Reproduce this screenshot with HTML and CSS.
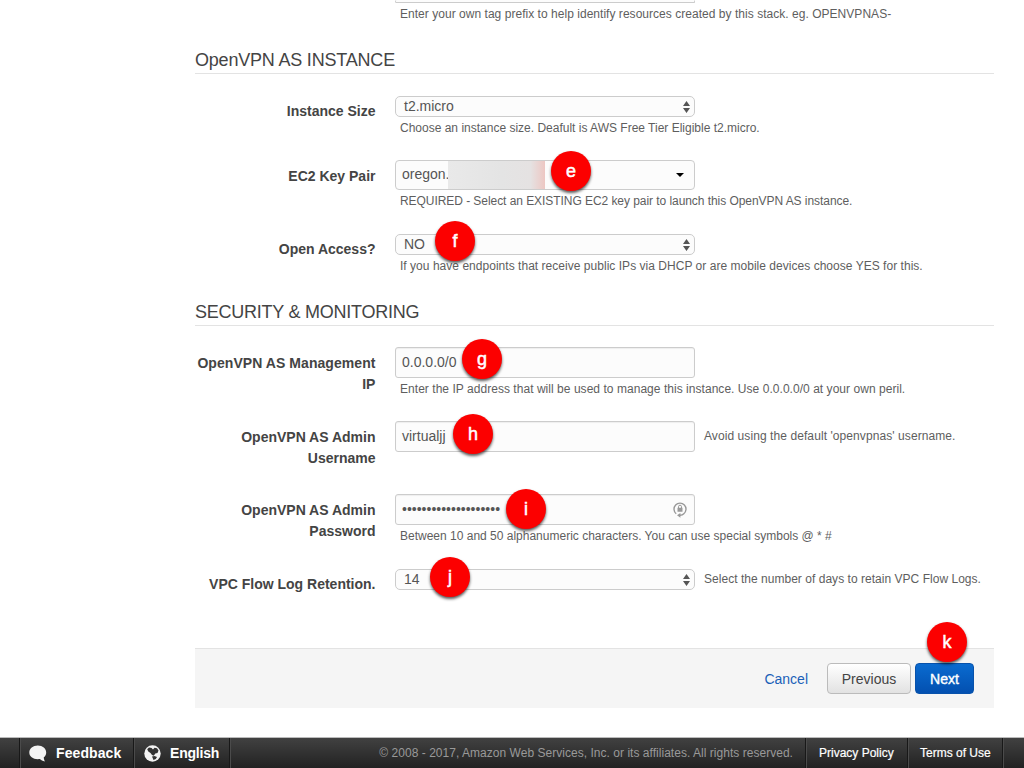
FILE: index.html
```html
<!DOCTYPE html>
<html lang="en">
<head>
<meta charset="utf-8">
<title>Specify Details</title>
<link rel="stylesheet" href="styles.css">
</head>
<body>
<div class="page">
  <main class="content">
    <div class="row row-prefix">
      <div class="label"></div>
      <div class="field">
        <div class="input input-cut"></div>
        <div class="help"><span class="t-prefix">Enter your own tag prefix to help identify resources created by this stack. eg. OPENVPNAS-</span></div>
      </div>
    </div>

    <h2 class="section"><span class="t-instance">OpenVPN AS INSTANCE</span></h2>
    <div class="row row-size">
      <div class="label"><span class="l-size">Instance Size</span></div>
      <div class="field">
        <div class="select"><span>t2.micro</span><svg class="arrows" viewBox="0 0 7 14"><path d="M0 6 3.500 1 7 6zM0 8h7l-3.500 5z"/></svg></div>
        <div class="help"><span class="t-size">Choose an instance size. Deafult is AWS Free Tier Eligible t2.micro.</span></div>
      </div>
    </div>
    <div class="row row-tall">
      <div class="label label-low"><span>EC2 Key Pair</span></div>
      <div class="field">
        <div class="combo"><span>oregon.</span><i class="redacted"></i><svg class="caret" viewBox="0 0 8 4"><path d="M0 0h8L4 4z"/></svg></div>
        <div class="help"><span class="t-key">REQUIRED - Select an EXISTING EC2 key pair to launch this OpenVPN AS instance.</span></div>
        <b class="badge badge-e">e</b>
      </div>
    </div>
    <div class="row row-access">
      <div class="label"><span>Open Access?</span></div>
      <div class="field">
        <div class="select"><span>NO</span><svg class="arrows" viewBox="0 0 7 14"><path d="M0 6 3.500 1 7 6zM0 8h7l-3.500 5z"/></svg></div>
        <div class="help"><span class="t-access">If you have endpoints that receive public IPs via DHCP or are mobile devices choose YES for this.</span></div>
        <b class="badge badge-f">f</b>
      </div>
    </div>

    <h2 class="section"><span class="t-security">SECURITY &amp; MONITORING</span></h2>
    <div class="row row-ip">
      <div class="label label-low"><span class="l-ip">OpenVPN AS Management<br>IP</span></div>
      <div class="field">
        <div class="input"><span>0.0.0.0/0</span></div>
        <div class="help"><span class="t-ip">Enter the IP address that will be used to manage this instance. Use 0.0.0.0/0 at your own peril.</span></div>
        <b class="badge badge-g">g</b>
      </div>
    </div>
    <div class="row row-user">
      <div class="label label-low"><span>OpenVPN AS Admin<br>Username</span></div>
      <div class="field">
        <div class="input"><span>virtualjj</span></div>
        <b class="badge badge-h">h</b>
      </div>
      <div class="side"><span class="t-user">Avoid using the default 'openvpnas' username.</span></div>
    </div>
    <div class="row row-tall">
      <div class="label label-low"><span>OpenVPN AS Admin<br>Password</span></div>
      <div class="field">
        <div class="input"><span class="dots">••••••••••••••••••••</span>
          <svg class="lock" viewBox="0 0 14 16"><path class="ring" d="M3.200 11.800A6 6 0 1 1 10.800 11.800Q9.500 13.300 7 13.300"/><path d="M4 13.300 7.400 10.900v4.800zM4.500 5.800h5v4h-5z"/><path class="shackle" d="M5.500 6V4.700a1.500 1.500 0 0 1 3 0V6"/></svg>
        </div>
        <div class="help"><span class="t-pass">Between 10 and 50 alphanumeric characters. You can use special symbols @ * #</span></div>
        <b class="badge badge-i">i</b>
      </div>
    </div>
    <div class="row row-log">
      <div class="label label-low"><span class="l-log">VPC Flow Log Retention.</span></div>
      <div class="field">
        <div class="select"><span>14</span><svg class="arrows" viewBox="0 0 7 14"><path d="M0 6 3.500 1 7 6zM0 8h7l-3.500 5z"/></svg></div>
        <b class="badge badge-j">j</b>
      </div>
      <div class="side side-short"><span class="t-log">Select the number of days to retain VPC Flow Logs.</span></div>
    </div>

    <div class="actions">
      <a class="cancel">Cancel</a>
      <div class="btn btn-prev">Previous</div>
      <div class="btn btn-next">Next</div>
      <b class="badge badge-k">k</b>
    </div>
  </main>

  <footer class="bar">
    <div class="cell cell-edge"></div>
    <div class="cell cell-feedback">
      <svg class="bubble" viewBox="0 0 18 17"><path d="M8.800.5c4.800 0 8.400 3 8.400 6.900 0 2-.9 3.700-2.400 4.900 0 1.500.3 2.700 1.100 4.200-2.200-.4-3.900-1.300-5-2.500C4.800 14.900.3 11.700.3 7.400.3 3.500 4 .5 8.800.5z"/></svg>
      <span>Feedback</span>
    </div>
    <div class="cell cell-lang">
      <svg class="globe" viewBox="0 0 17 17"><circle cx="8.500" cy="8.500" r="8.200"/><path d="M3.200 4.200 5 2.600l2.600.3L9 4.600l1.500-1.900 2.500.6 1.500 2.200-1 2.500-2.200.4-1.500 2.300-1.800-.6L6.500 8 4.300 6.600zM8 11.500l2.500-.5 2.500 1-1.200 2-2.300 1z"/></svg>
      <span>English</span>
    </div>
    <div class="copy"><span class="t-copy">© 2008 - 2017, Amazon Web Services, Inc. or its affiliates. All rights reserved.</span></div>
    <div class="cell cell-privacy"><span>Privacy Policy</span></div>
    <div class="cell cell-terms"><span>Terms of Use</span></div>
    <div class="cell cell-end"></div>
  </footer>
</div>
</body>
</html>
```
FILE: styles.css
```css
* { box-sizing: border-box; }
body {
  margin: 0;
  background: #fff;
  color: #444;
  font-family: "Liberation Sans", Arial, sans-serif;
  overflow: hidden;
}
.page { height: 768px; display: flex; flex-direction: column; overflow: hidden; }
.content { width: 799px; margin-left: 195px; height: 738px; flex: none; }
span { white-space: nowrap; }

.row { display: grid; grid-template-columns: 180.5px 300px 1fr; column-gap: 19.5px; }
.row > .side { margin-left: -10.5px; }
.row-prefix { height: 48px; }
.row-size { height: 64px; }
.row-tall { height: 74px; }
.row-access { height: 66px; }
.row-ip { height: 74px; }
.row-user { height: 73px; }
.row-log { height: 80px; }

.section {
  margin: 0 0 22px;
  height: 26px;
  line-height: 25px;
  border-bottom: 1px solid #e3e3e3;
  font-size: 18px;
  font-weight: 400;
  color: #444;
}
.row-access + .section { margin-bottom: 21px; }

.label { padding-top: 5px; text-align: right; font-size: 14px; font-weight: 700; line-height: 21px; }
.label-low { padding-top: 6px; }
.field { position: relative; }
.select, .combo, .input {
  display: flex;
  align-items: center;
  border: 1px solid #ccc;
  background: #fcfcfc;
  font-size: 14px;
  color: #555;
}
.select { height: 21px; padding: 0 4px 0 8px; border-radius: 5px; justify-content: space-between; }
.select span { margin-bottom: 2px; }
.row-log .select { margin-top: 1px; }
.combo { height: 30px; padding: 0 10px 0 6px; border-radius: 4px; }
.input { height: 31px; padding: 0 7px 0 6px; border-radius: 3px; box-shadow: inset 0 1px 1px #eee; }
.input span { margin-bottom: 2px; }
.input-cut { height: 3px; border-top: 0; margin-bottom: 2px; box-shadow: none; }
.arrows { width: 7px; height: 14px; fill: #555; }
.caret { width: 8px; height: 4px; margin: 0 0 0 auto; fill: #000; }
.redacted {
  width: 97px;
  height: 28px;
  margin-left: -1px;
  background: linear-gradient(90deg, #e9e9e9 0%, #e4e4e4 55%, #e5e2e2 85%, #edc7c3 100%);
}
.combo span { margin-bottom: 2px; }
.lock { width: 14px; height: 16px; margin-left: auto; fill: #999; }
.ring, .shackle { fill: none; stroke: #999; stroke-width: 1.4; }
.shackle { stroke-width: 1; }

.help { margin-top: 2px; padding-left: 5px; font-size: 12px; line-height: 18px; color: #5e5e5e; }
.side { padding-top: 6px; font-size: 12px; line-height: 18px; color: #5e5e5e; }
.side-short { padding-top: 2px; }

/* Tracking per line */
.t-instance { letter-spacing: -.2px; }
.t-security { letter-spacing: -.24px; }
.t-prefix { letter-spacing: .033px; }
.t-key { letter-spacing: -.058px; }
.t-access { letter-spacing: .03px; }
.t-ip { letter-spacing: .04px; }
.t-user { letter-spacing: .08px; }
.t-log { letter-spacing: .03px; }
.t-copy { letter-spacing: .03px; }
.l-ip { letter-spacing: .06px; }

.badge {
  position: absolute;
  width: 40px;
  height: 40px;
  border-radius: 50%;
  background: #fc0000;
  box-shadow: 0 2px 3px rgba(0, 0, 0, .65);
  color: #fff;
  font-size: 18px;
  font-weight: 400;
  -webkit-text-stroke: .5px #fff;
  line-height: 41px;
  text-align: center;
}
.badge-e { left: 156px; top: -9px; }
.badge-f { left: 40px; top: -13px; }
.badge-g { left: 67px; top: -8px; }
.badge-h { left: 58px; top: -7px; }
.badge-i { left: 111px; top: -5px; }
.badge-j { left: 35px; top: -11px; }
.badge-k { left: 732px; top: -27px; }

.actions {
  position: relative;
  height: 60px;
  display: flex;
  align-items: center;
  justify-content: flex-end;
  padding-right: 20px;
  background: #f5f5f5;
  border-top: 1px solid #e3e3e3;
  font-size: 14px;
}
.cancel { margin-right: 19px; color: #1a5fb8; }
.btn { height: 31px; line-height: 30px; border-radius: 4px; text-align: center; border: 1px solid #bbb; }
.btn-prev { width: 84px; margin-right: 4px; background: linear-gradient(#fff, #e2e2e2); }
.btn-next { width: 59px; background: linear-gradient(#0a6bd0, #0350b0); border-color: #0852ab; color: #fff; -webkit-text-stroke: .4px #fff; }

.bar {
  height: 30px;
  display: flex;
  background: linear-gradient(#414141, #222);
  box-shadow: 0 -1px 0 #bbb;
  color: #fff;
  font-size: 14px;
}
.cell { display: flex; align-items: center; border-right: 1px solid #4b4b4b; box-shadow: inset -1px 0 0 #181818; }
.cell-edge { width: 21px; }
.cell-feedback { width: 114px; padding-left: 8px; gap: 9px; font-weight: 700; letter-spacing: .1px; }
.cell-lang { width: 96px; padding-left: 9px; gap: 9px; font-weight: 700; letter-spacing: -.2px; }
.bubble { width: 18px; height: 17px; fill: #f3f3f3; }
.globe { width: 17px; height: 17px; fill: #f3f3f3; }
.globe path { fill: #333; }
.copy { width: 576px; padding-right: 13px; text-align: right; font-size: 12px; line-height: 30px; color: #999; border-right: 1px solid #4b4b4b; box-shadow: inset -1px 0 0 #181818; }
.cell-privacy { width: 102px; padding-left: 12px; font-size: 12px; -webkit-text-stroke: .2px #fff; }
.cell-terms { width: 95px; padding-left: 11px; font-size: 12px; -webkit-text-stroke: .2px #fff; }
.cell-end { width: 20px; border: 0; box-shadow: none; }
```
